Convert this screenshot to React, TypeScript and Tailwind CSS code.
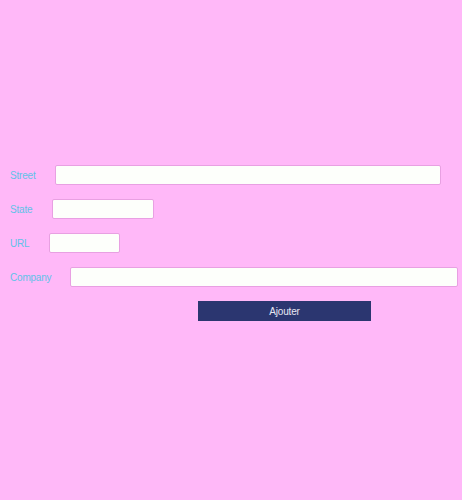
const fields = [
  { label: 'Street', labelWidth: 'w-[45px]', width: 'w-[386px]' },
  { label: 'State', labelWidth: 'w-[42px]', width: 'w-[102px]' },
  { label: 'URL', labelWidth: 'w-[39px]', width: 'w-[71px]' },
  { label: 'Company', labelWidth: 'w-[60px]', width: 'w-[388px]' },
];

export default function App() {
  return (
    <div className="min-h-[500px] w-full bg-[#ffb8f8] pt-[165px] font-['Liberation_Sans',Arial,sans-serif]">
      <form className="flex flex-col gap-[14px]">
        {fields.map((field) => (
          <div key={field.label} className="flex h-[20px] items-center pl-[10px]">
            <label className={`${field.labelWidth} shrink-0 text-[10px] tracking-[-0.2px] text-[#62c2e8]`}>
              {field.label}
            </label>
            <input
              type="text"
              className={`${field.width} block h-[20px] shrink-0 rounded-[2px] border border-[#e8a0e2] bg-[#fdfffb] outline-none`}
            />
          </div>
        ))}
        <div className="flex pl-[198px]">
          <button
            type="button"
            className="h-[20px] w-[173px] bg-[#2b3670] text-[10px] tracking-[-0.2px] text-[#e6e6f2]"
          >
            Ajouter
          </button>
        </div>
      </form>
    </div>
  );
}
